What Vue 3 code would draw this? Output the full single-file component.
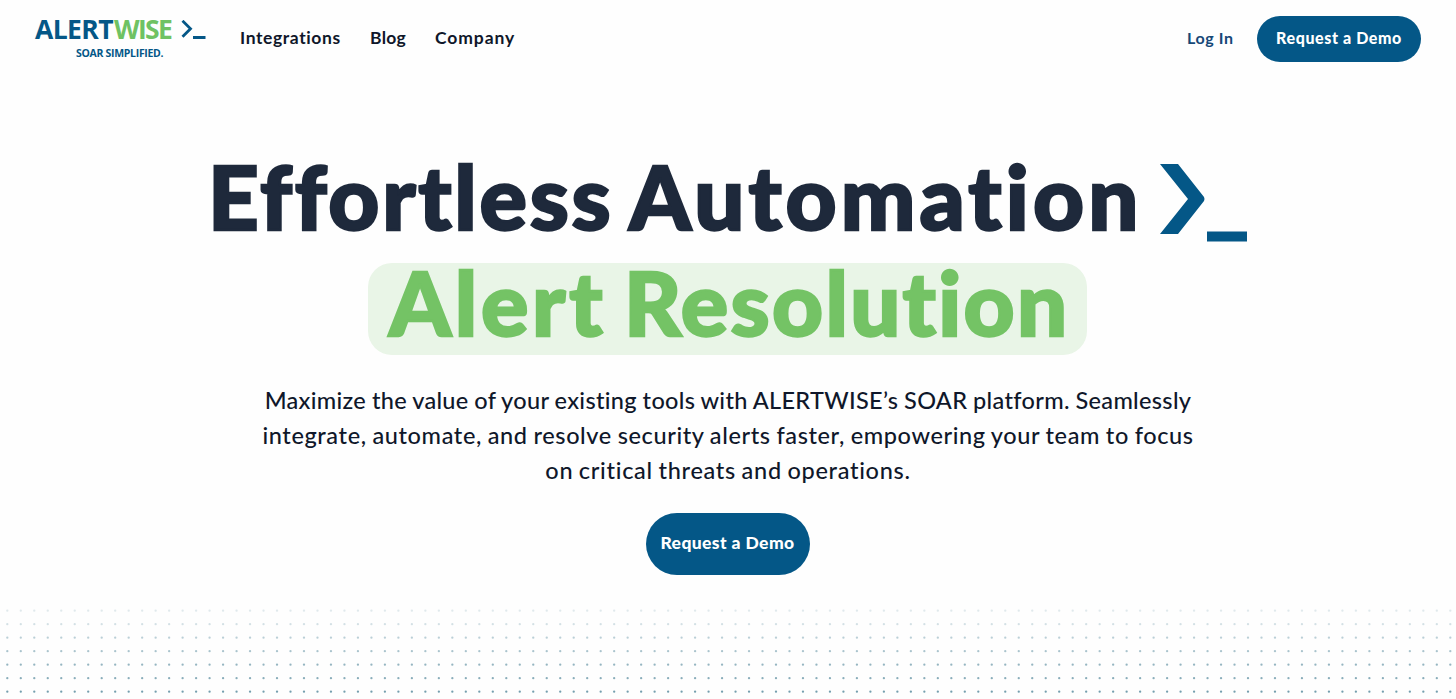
<script setup>
import { ref } from 'vue'

const links = ref(['Integrations', 'Blog', 'Company'])

const lines = [
  { text: 'Maximize the value of your existing tools with ALERTWISE’s SOAR platform. Seamlessly', cls: 'l1' },
  { text: 'integrate, automate, and resolve security alerts faster, empowering your team to focus', cls: 'l2' },
  { text: 'on critical threats and operations.', cls: 'l3' }
]

// dot grid, rows get stronger towards the bottom
const step = 13.486
const rows = [0.14, 0.2, 0.32, 0.4, 0.5, 0.56, 0.66]
</script>

<template>
  <div class="page">
    <header class="header">
      <a class="logo">
        <span class="logo-top">
          <span class="alert">ALERT</span><span class="wise">WISE</span>
          <svg class="logo-prompt" width="25" height="22" viewBox="0 0 25 22">
            <path d="M1.5 0.8L9.5 8.8L1.5 16.8" fill="none" stroke="#045787" stroke-width="2.8" />
            <rect x="12" y="16" width="12.5" height="3" fill="#045787" />
          </svg>
        </span>
        <span class="tagline">SOAR SIMPLIFIED.</span>
      </a>
      <nav class="nav">
        <a v-for="link in links" :key="link" :class="link.toLowerCase()">{{ link }}</a>
      </nav>
      <div class="actions">
        <a class="login">Log In</a>
        <a class="btn btn-small"><span>Request a Demo</span></a>
      </div>
    </header>

    <main class="hero">
      <h1>
        <span class="line">
          <span class="w1">Effortless</span>
          <span class="w2">Automation</span>
          <svg class="prompt" width="87" height="78" viewBox="0 0 87 78">
            <path d="M0 0H18L44 33Q45 35 44 37L18 70H0L28 35Z" fill="#045787" />
            <rect x="47" y="67.5" width="40" height="10" fill="#045787" />
          </svg>
        </span>
        <span class="pill">
          <span class="w3">Alert</span>
          <span class="w4">Resolution</span>
        </span>
      </h1>
      <p>
        <span v-for="l in lines" :key="l.cls" :class="l.cls">{{ l.text }}</span>
      </p>
      <a class="btn btn-large"><span>Request a Demo</span></a>
    </main>

    <svg class="dots" width="1456" height="99">
      <g v-for="(o, r) in rows" :key="r" :opacity="o" fill="#2f6f86">
        <circle v-for="n in 108" :key="n" :cx="7.3 + (n - 1) * step" :cy="10.7 + r * 13.5" r="1.15" />
      </g>
    </svg>
  </div>
</template>

<style>
body {
  margin: 0;
  background: #fefefe;
}
</style>

<style scoped>
.page {
  height: 699px;
  overflow: hidden;
  display: flex;
  flex-direction: column;
  font-family: Lato, "Liberation Sans", sans-serif;
  font-variant-ligatures: none;
  color: #0f172a;
  white-space: nowrap;
}
.header {
  height: 77px;
  flex: none;
  box-sizing: border-box;
  padding: 0 35px;
  display: flex;
  align-items: center;
}
.logo {
  width: 172px;
  height: 46px;
  display: flex;
  flex-direction: column;
  font-family: "Open Sans", sans-serif;
  font-weight: 700;
  color: #045787;
}
.logo-top {
  display: flex;
  height: 28px;
  line-height: 26px;
  font-size: 26.5px;
}
.alert {
  width: 79px;
  letter-spacing: -0.6px;
}
.wise {
  width: 67px;
  letter-spacing: -1.7px;
  color: #6fc263;
}
.logo-prompt {
  margin-top: 4px;
}
.tagline {
  margin: 2px 0 0 41px;
  font-size: 10.5px;
  line-height: 14px;
  letter-spacing: -0.3px;
}
.nav {
  display: flex;
  margin-left: 33px;
  padding-bottom: 2px;
  font-size: 17.5px;
  line-height: 24px;
  font-weight: 700;
}
.integrations {
  width: 130px;
  letter-spacing: 0.6px;
}
.blog {
  width: 65px;
  letter-spacing: 0.3px;
}
.company {
  letter-spacing: 0.9px;
}
.actions {
  margin-left: auto;
  display: flex;
  align-items: center;
}
.login {
  width: 70px;
  padding-bottom: 2px;
  font-size: 16px;
  letter-spacing: 0.6px;
  font-weight: 700;
  color: #164877;
}
.btn {
  display: flex;
  align-items: center;
  justify-content: center;
  background: #045787;
  color: #fff;
  font-weight: 900;
}
.btn span {
  padding-bottom: 2px;
}
.btn-small {
  width: 164px;
  height: 46px;
  border-radius: 23px;
  font-size: 16px;
  letter-spacing: 0.6px;
}
.btn-large {
  width: 164px;
  height: 62px;
  border-radius: 31px;
  font-size: 17.5px;
  letter-spacing: 0.4px;
}
.hero {
  height: 523px;
  flex: none;
  display: flex;
  flex-direction: column;
  align-items: center;
}
h1 {
  margin: 70px 0 0;
  display: flex;
  flex-direction: column;
  align-items: center;
  font-size: 88.5px;
  line-height: 98px;
  font-weight: 900;
  color: #1e293b;
  -webkit-text-stroke: 2.4px currentColor;
}
.line {
  display: flex;
  width: 1040px;
  height: 106px;
}
.w1 {
  width: 421px;
  letter-spacing: 2.7px;
}
.w2 {
  width: 531px;
  letter-spacing: 4.1px;
}
.prompt {
  margin-top: 17px;
  stroke: none;
}
.pill {
  box-sizing: border-box;
  width: 719px;
  height: 92px;
  margin: 10px 1px 0 0;
  padding-left: 21px;
  display: flex;
  line-height: 78px;
  border-radius: 24px;
  background: #e9f5e7;
  color: #74c365;
}
.w3 {
  width: 235px;
  letter-spacing: 3.7px;
}
.w4 {
  letter-spacing: 2.3px;
}
p {
  margin: 28px 0 0;
  display: flex;
  flex-direction: column;
  align-items: center;
  font-size: 23.5px;
  line-height: 34.8px;
  font-weight: 500;
}
.l1 {
  letter-spacing: 0.32px;
  word-spacing: -0.5px;
}
.l2 {
  letter-spacing: 0.62px;
  word-spacing: -0.8px;
}
.l3 {
  letter-spacing: 0.7px;
  word-spacing: -1px;
}
.btn-large {
  margin: 25.6px 1px 0 0;
}
.dots {
  flex: none;
}
</style>
